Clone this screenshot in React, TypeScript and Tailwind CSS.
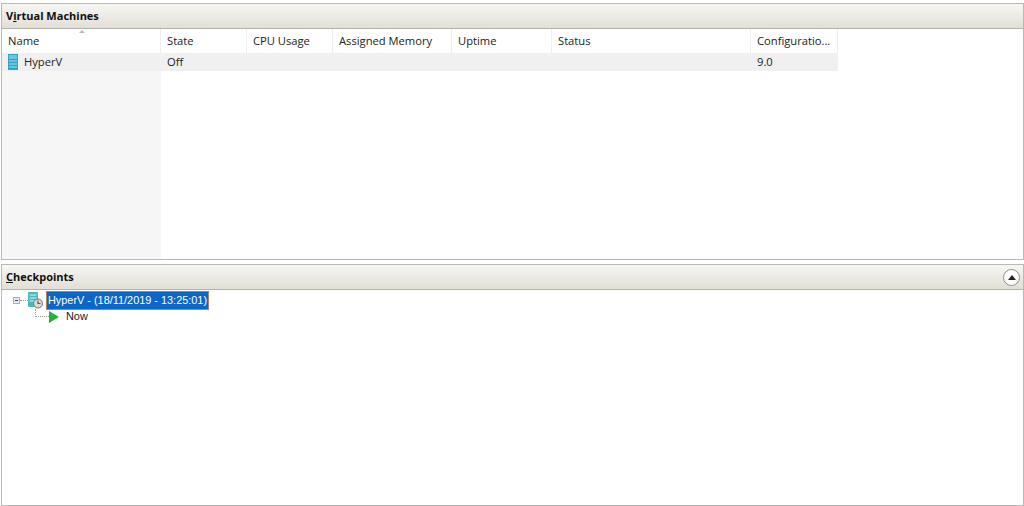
const columns = [
  { label: "Name", width: "w-[159px]" },
  { label: "State", width: "w-[86px]" },
  { label: "CPU Usage", width: "w-[86px]" },
  { label: "Assigned Memory", width: "w-[119px]" },
  { label: "Uptime", width: "w-[100px]" },
  { label: "Status", width: "w-[199px]" },
  { label: "Configuratio...", width: "w-[87px]" },
];

function PanelHeader({ title, action }: { title: React.ReactNode; action?: React.ReactNode }) {
  return (
    <div className="flex h-[25px] shrink-0 items-center justify-between border-b border-[#b4b2ac] bg-gradient-to-b from-[#f7f6f3] to-[#e2dfd7] pl-[4px] pr-[3px] text-[11px] font-bold text-[#111]">
      <span>{title}</span>
      {action}
    </div>
  );
}

function VmIcon() {
  return (
    <svg width="10" height="16" viewBox="0 0 10 16">
      <rect width="10" height="16" fill="#2fa4c9" />
      <rect x="1" y="1" width="8" height="4" fill="#6cc8df" />
      <path d="M1 7h8M1 10h8M1 13h8" stroke="#a5e0ec" strokeWidth="1" />
    </svg>
  );
}

function CheckpointIcon() {
  return (
    <svg width="15" height="17" viewBox="0 0 15 17">
      <rect x="0" y="0" width="10" height="15" rx="1" fill="#4db8c4" />
      <path d="M1.5 3h7M1.5 6h7M1.5 9h5" stroke="#d5f0f2" strokeWidth="1" />
      <circle cx="10" cy="11.5" r="4.5" fill="#d8d8d4" stroke="#77756f" strokeWidth="1" />
      <path d="M10 8.5v3h2.5" fill="none" stroke="#8a4a3a" strokeWidth="1.2" />
    </svg>
  );
}

export default function App() {
  return (
    <div className="flex h-[506px] w-[1024px] flex-col overflow-hidden bg-white pt-[3px] font-['Open_Sans',sans-serif] text-[11.2px] text-[#222]">
      <section className="ml-px flex h-[257px] shrink-0 flex-col border border-[#b9b9b9]">
        <PanelHeader
          title={
            <>
              V<span className="underline">i</span>rtual Machines
            </>
          }
        />
        <div className="flex min-h-0 flex-1 flex-col">
          <div className="flex h-[24px] shrink-0">
            {columns.map((col, i) => (
              <div
                key={col.label}
                className={`relative flex items-center border-r border-[#eeeeee] pl-[6px] ${col.width}`}
              >
                {i === 0 && (
                  <span className="absolute left-[77px] top-[1px] h-0 w-0 border-x-[3px] border-b-[3px] border-x-transparent border-b-[#bbbbbb]" />
                )}
                {col.label}
              </div>
            ))}
          </div>
          <div className="flex h-[18px] w-[836px] shrink-0 items-center bg-[#f0f0f0]">
            <div className="flex w-[159px] items-center gap-[6px] pl-[6px]">
              <VmIcon />
              HyperV
            </div>
            <div className="w-[86px] pl-[6px]">Off</div>
            <div className="w-[504px]" />
            <div className="pl-[6px]">9.0</div>
          </div>
          <div className="flex flex-1">
            <div className="w-[159px] bg-[#f6f6f6]" />
          </div>
        </div>
      </section>

      <section className="ml-px mt-[4px] flex min-h-0 flex-1 flex-col border border-[#b9b9b9]">
        <PanelHeader
          title={
            <>
              <span className="underline">C</span>heckpoints
            </>
          }
          action={
            <span className="flex h-[17px] w-[17px] items-center justify-center rounded-full border border-[#8d8d8d] bg-white">
              <span className="h-0 w-0 border-x-[4px] border-b-[5px] border-x-transparent border-b-[#222]" />
            </span>
          }
        />
        <div className="flex flex-1 flex-col pl-[11px] pt-[2px] font-['Liberation_Sans',sans-serif] text-[10.9px]">
          <div className="flex h-[17px] items-center">
            <span className="flex h-[7px] w-[7px] items-center justify-center border border-[#a8b0b8] bg-[#e8eaee]">
              <span className="h-px w-[3px] bg-[#445]" />
            </span>
            <span className="w-[8px] border-t border-dotted border-[#999]" />
            <CheckpointIcon />
            <span className="ml-[3px] border border-[#b5805a] bg-[#0c66c8] px-px text-white">
              HyperV - (18/11/2019 - 13:25:01)
            </span>
          </div>
          <div className="flex h-[15px] items-center pl-[22px]">
            <span className="mb-[8px] h-[8px] w-[14px] border-b border-l border-dotted border-[#999]" />
            <svg width="10" height="12" viewBox="0 0 10 12">
              <path d="M0 0L10 6L0 12Z" fill="#22b33a" />
            </svg>
            <span className="ml-[7px]">Now</span>
          </div>
        </div>
      </section>
    </div>
  );
}
